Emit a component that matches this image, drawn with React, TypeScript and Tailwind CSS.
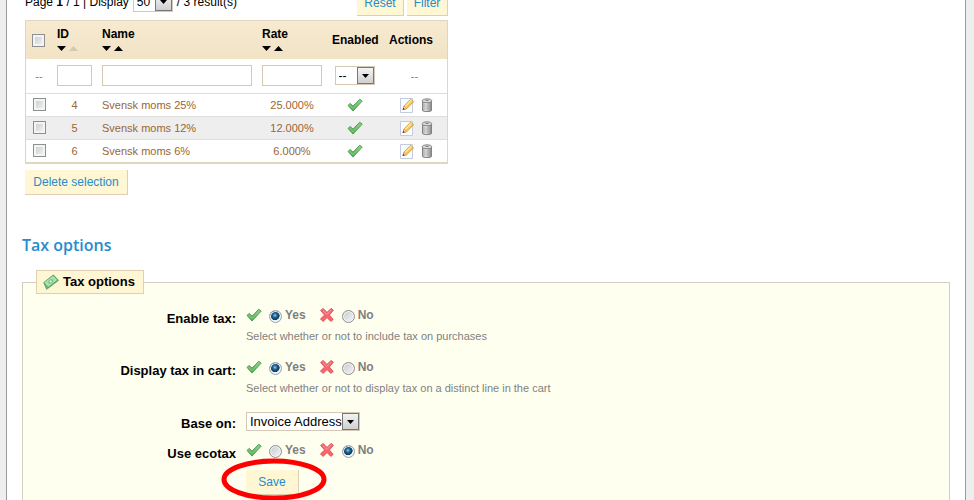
import type { ReactNode } from "react";

const taxes = [
  { id: 4, name: "Svensk moms 25%", rate: "25.000%" },
  { id: 5, name: "Svensk moms 12%", rate: "12.000%" },
  { id: 6, name: "Svensk moms 6%", rate: "6.000%" },
];

function CheckIcon() {
  return (
    <svg width="16" height="16" viewBox="0 0 16 16" className="block shrink-0" aria-hidden="true">
      <defs>
        <linearGradient id="tick" x1="0" y1="0" x2="0" y2="1">
          <stop offset="0" stopColor="#8ed08a" />
          <stop offset="1" stopColor="#4faa4c" />
        </linearGradient>
      </defs>
      <path d="M1 8.400 3.200 6.400l2.800 2.700 6.800-6.900 2.400 1.900-9.200 10z" fill="url(#tick)" stroke="#4a9c50" strokeWidth=".9" strokeLinejoin="round" />
      <path d="m2.600 8.200 3.500 3.400 7.400-7.600" stroke="#8fd08b" strokeWidth=".8" fill="none" />
    </svg>
  );
}

function CrossIcon() {
  return (
    <svg width="16" height="16" viewBox="0 0 16 16" className="block shrink-0" aria-hidden="true">
      <path
        d="M1.600 3.400 4.200 1.400 8 5.400l4-4 2.400 1.800L10.400 8l3.800 4.400-2.400 2L8 10.600l-3.800 3.800L1.400 12 5.600 8z"
        fill="#f4666c"
        stroke="#e4505a"
        strokeWidth=".9"
        strokeLinejoin="round"
      />
      <path d="m3.500 3.200 4.400 4.300 4.300-4.400" stroke="#f9a0a2" strokeWidth=".9" fill="none" />
    </svg>
  );
}

function EditIcon() {
  return (
    <svg width="16" height="16" viewBox="0 0 16 16" className="block" aria-hidden="true">
      <path d="M1.500 1.500h12v14h-12z" fill="#fdfdff" stroke="#c3cbe0" />
      <path d="M4 12.600 5 9l6.600-6.800 3 2.600-7 7z" fill="#f6c64c" stroke="#c98d26" strokeWidth=".7" strokeLinejoin="round" />
      <path d="m6.200 9.400 6.200-6.200" stroke="#fdeaa0" strokeWidth="1.400" />
      <path d="m4 12.600 1-3.600 2.600 2.800z" fill="#f3dcb8" stroke="#b98a4a" strokeWidth=".5" />
      <path d="m3.600 13 .7-2.200 1.500 1.500z" fill="#333" />
    </svg>
  );
}

function TrashIcon() {
  return (
    <svg width="16" height="16" viewBox="0 0 16 16" className="block" aria-hidden="true">
      <defs>
        <linearGradient id="can" x1="0" y1="0" x2="1" y2="0">
          <stop offset="0" stopColor="#a2a2a2" />
          <stop offset=".35" stopColor="#ececec" />
          <stop offset="1" stopColor="#858585" />
        </linearGradient>
      </defs>
      <path d="M3.500 4v9.600q.4 1 4.500 1t4.500-1V4z" fill="url(#can)" stroke="#7a7a7a" strokeWidth=".9" />
      <path d="M6 7v6M8 7.500v6M10 7v6" stroke="#9a9a9a" strokeWidth=".6" />
      <ellipse cx="8" cy="3.800" rx="4.800" ry="2" fill="#dcdcdc" stroke="#7a7a7a" strokeWidth=".9" />
      <path d="M6.500 3.400h3" stroke="#777" />
    </svg>
  );
}

function MoneyIcon() {
  return (
    <svg width="16" height="16" viewBox="0 0 16 16" className="block" aria-hidden="true">
      <path d="M.8 9 10.500 1 15.600 6.400 3.600 15.400z" fill="#6fb67a" stroke="#4b9a5a" strokeWidth=".6" />
      <path d="m.8 8.400 9.300-7.200 4.700 4.800-10 7.600z" fill="#9ad8a2" stroke="#4b9a5a" strokeWidth=".7" />
      <path d="m2.800 8.400 7-5.300 3.100 3.100-7.400 5.500z" fill="none" stroke="#d3f1d4" strokeWidth=".7" />
      <ellipse cx="7.700" cy="7.400" rx="1.900" ry="1.600" fill="#c9eecb" stroke="#4b9a5a" strokeWidth=".6" />
    </svg>
  );
}

function SortArrows({ upDisabled = false }: { upDisabled?: boolean }) {
  return (
    <span className="flex h-3 items-center gap-[3px]">
      <button type="button" aria-label="Sort descending">
        <svg width="9" height="5" viewBox="0 0 9 5" className="block"><path d="M0 0h9L4.500 5z" /></svg>
      </button>
      <button type="button" aria-label="Sort ascending" disabled={upDisabled}>
        <svg width="9" height="5" viewBox="0 0 9 5" className="block"><path d="M0 5h9L4.500 0z" fill={upDisabled ? "#d0c9b8" : "#000"} /></svg>
      </button>
    </span>
  );
}

function Select({ label, value, id, className }: { label?: string; value: string; id?: string; className: string }) {
  return (
    <span className="relative inline-block align-top">
      <select
        id={id}
        aria-label={label}
        defaultValue={value}
        className={`block h-[19px] appearance-none rounded-none border border-[#d5c9b5] bg-white p-0 pl-[3px] leading-4 text-black ${className}`}
      >
        <option>{value}</option>
      </select>
      <span className="pointer-events-none absolute top-px right-px flex h-[17px] w-[17px] items-center justify-center border border-[#777] bg-linear-to-b from-[#f4f4f4] to-[#cfcfcf]">
        <svg width="7" height="4" viewBox="0 0 7 4"><path d="M0 0h7L3.500 4z" /></svg>
      </span>
    </span>
  );
}

function Checkbox({ label }: { label: string }) {
  return (
    <input
      type="checkbox"
      aria-label={label}
      className="block h-[13px] w-[13px] appearance-none border border-[#8e8f8f] bg-linear-to-br from-[#c5cad0] to-[#f6f6f6] shadow-[inset_0_0_0_2px_#f4f4f4] checked:bg-[#2d6c93]"
    />
  );
}

function Button({ children, className = "" }: { children: ReactNode; className?: string }) {
  return (
    <button
      type="button"
      className={`h-[25px] border-r border-b border-[#e0d0b1] bg-[#fff6d3] text-center text-xs text-[#268ccd] ${className}`}
    >
      {children}
    </button>
  );
}

function Radio({ name, label, checked }: { name: string; label: string; checked: boolean }) {
  return (
    <label className="flex h-4 items-center gap-[3px] text-xs font-bold text-[#7f7f7f]">
      <input
        type="radio"
        name={name}
        defaultChecked={checked}
        className="mt-[3px] h-[13px] w-[13px] appearance-none rounded-full border border-[#8e8f8f] bg-linear-to-br from-[#c5cad0] to-[#f6f6f6] shadow-[inset_0_0_0_1px_#f4f4f4] checked:border-[#8fa3b3] checked:bg-[radial-gradient(circle_at_45%_40%,#8fd3f2_0,#1c5d8c_25%,#123b5c_50%,#e9f1f6_55%)]"
      />
      {label}
    </label>
  );
}

function YesNo({ name, value }: { name: string; value: "yes" | "no" }) {
  return (
    <div className="flex items-center">
      <CheckIcon />
      <span className="w-[7px]" />
      <Radio name={name} label="Yes" checked={value === "yes"} />
      <span className="w-[13px]" />
      <CrossIcon />
      <span className="w-[7px]" />
      <Radio name={name} label="No" checked={value === "no"} />
    </div>
  );
}

function Row({ label, htmlFor, className = "", children }: { label: string; htmlFor?: string; className?: string; children: ReactNode }) {
  const text = "w-[213px] shrink-0 pt-1 text-right text-[13px] leading-4 font-bold text-black";
  return (
    <div className={`flex gap-[10px] ${className}`} role={htmlFor ? undefined : "group"} aria-label={htmlFor ? undefined : label}>
      {htmlFor ? <label htmlFor={htmlFor} className={text}>{label}</label> : <div className={text}>{label}</div>}
      <div>{children}</div>
    </div>
  );
}

function TaxTable() {
  const field = "block h-[21px] w-full border border-[#d5c9b5] bg-white px-1 text-[11px]";
  return (
    <table className="w-[423px] table-fixed border-separate border-spacing-0 border border-b-2 border-[#e0d5c0] text-[11px]">
      <colgroup>
        <col className="w-[26px]" />
        <col className="w-[45px]" />
        <col className="w-[160px]" />
        <col className="w-[70px]" />
        <col className="w-[55px]" />
        <col className="w-[65px]" />
      </colgroup>
      <thead className="bg-linear-to-b from-[#f6ead0] to-[#f2e3c6] text-left text-xs text-black">
        <tr className="h-[38px]">
          <th className="p-0 pl-[6px]"><Checkbox label="Select all" /></th>
          <th className="px-[5px] py-0 leading-4">ID<SortArrows upDisabled /></th>
          <th className="px-[5px] py-0 leading-4">Name<SortArrows /></th>
          <th className="px-[5px] py-0 leading-4">Rate<SortArrows /></th>
          <th className="px-[5px] py-0">Enabled</th>
          <th className="px-[7px] py-0">Actions</th>
        </tr>
      </thead>
      <tbody className="text-center text-[#996633]">
        <tr className="h-[34px] text-[#7f7f7f]">
          <td className="p-0">--</td>
          <td className="px-[5px] pt-0 pb-px"><input aria-label="Filter by ID" className={field} /></td>
          <td className="px-[5px] pt-0 pb-px"><input aria-label="Filter by name" className={field} /></td>
          <td className="px-[5px] pt-0 pb-px"><input aria-label="Filter by rate" className={field} /></td>
          <td className="pt-0 pb-px"><Select label="Filter by enabled" value="--" className="w-[40px] text-xs" /></td>
          <td className="p-0">--</td>
        </tr>
        {taxes.map((tax) => (
          <tr key={tax.id} className="h-[23px] even:bg-white odd:bg-[#eee]">
            <td className="border-t border-[#dedede] pt-0 pb-px pl-[7px]"><Checkbox label={`Select ${tax.name}`} /></td>
            <td className="border-t border-[#dedede] p-0">{tax.id}</td>
            <td className="border-t border-[#dedede] px-[5px] py-0 text-left">{tax.name}</td>
            <td className="border-t border-[#dedede] p-0">{tax.rate}</td>
            <td className="border-t border-[#dedede] p-0">
              <a href="#toggle" aria-label="Enabled" className="flex justify-center"><CheckIcon /></a>
            </td>
            <td className="border-t border-[#dedede] p-0">
              <div className="flex justify-center gap-1 pl-1">
                <a href="#edit" aria-label="Edit"><EditIcon /></a>
                <a href="#delete" aria-label="Delete"><TrashIcon /></a>
              </div>
            </td>
          </tr>
        ))}
      </tbody>
    </table>
  );
}

export default function App() {
  return (
    <div className="h-screen overflow-hidden bg-[#eee] pr-2 pl-[6px] font-['Liberation_Sans',Arial,sans-serif] text-xs text-black">
      <main className="min-h-full overflow-hidden border-x border-[#999] bg-white px-[15px]">
        <div className="ml-[3px] w-[423px]">
          <div className="-mt-[10px] mb-1 flex h-[26px] items-end justify-between">
            <div className="flex h-[24px] items-center gap-1 self-start">
              <span>Page <b>1</b> / 1 | Display</span>
              <Select label="Results per page" value="50" className="w-[40px] text-xs" />
              <span>/ 3 result(s)</span>
            </div>
            <div className="flex gap-[3px]">
              <Button className="w-[47px]">Reset</Button>
              <Button className="w-[41px]">Filter</Button>
            </div>
          </div>
          <TaxTable />
          <Button className="mt-[6px] w-[103px]">Delete selection</Button>
        </div>

        <h2 className="mt-[38px] font-['Trebuchet_MS','Open_Sans',sans-serif] text-base leading-6 font-semibold text-[#268ccd]">Tax options</h2>

        <fieldset className="mt-[13px] border border-[#d3cfc0] bg-[#fffff0] pb-10">
          <legend className="ml-[13px] flex h-6 items-center gap-1 border border-[#e0d0b1] bg-[#fff6d3] pr-2 pl-[6px] text-[13px] font-bold">
            <MoneyIcon />
            Tax options
          </legend>
          <Row label="Enable tax:" className="mt-[13px] h-[52px]">
            <YesNo name="enable" value="yes" />
            <p className="mt-[5px] text-[11px] leading-4 text-[#7f7f7f]">Select whether or not to include tax on purchases</p>
          </Row>
          <Row label="Display tax in cart:" className="h-[53px]">
            <YesNo name="display" value="yes" />
            <p className="mt-[5px] text-[11px] leading-4 text-[#7f7f7f]">Select whether or not to display tax on a distinct line in the cart</p>
          </Row>
          <Row label="Base on:" htmlFor="base" className="h-[30px]">
            <Select id="base" value="Invoice Address" className="w-[114px] text-[13px]" />
          </Row>
          <Row label="Use ecotax">
            <YesNo name="ecotax" value="no" />
          </Row>
          <div className="relative mt-2 ml-[223px] w-[53px]">
            <Button className="block w-full">Save</Button>
            {/* highlight ring around the save button */}
            <svg width="106" height="43" viewBox="0 0 106 43" className="pointer-events-none absolute -top-[12px] -left-[25px] max-w-none" aria-hidden="true">
              <ellipse cx="53" cy="21.500" rx="50" ry="18.500" fill="none" stroke="#fe0000" strokeWidth="5" />
            </svg>
          </div>
        </fieldset>
      </main>
    </div>
  );
}
